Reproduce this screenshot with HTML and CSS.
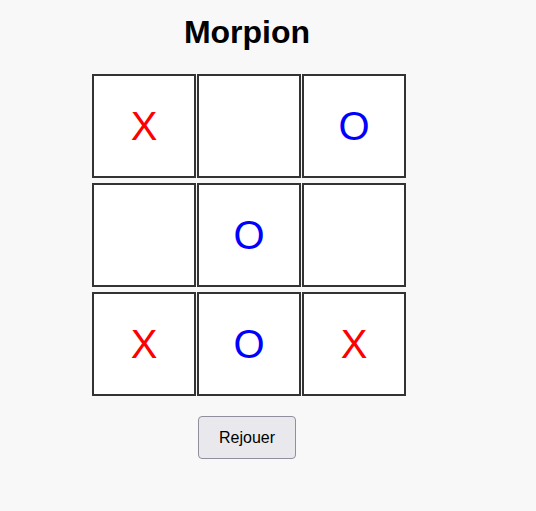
FILE: index.html
```html
<!DOCTYPE html>
<html lang="fr">
<head>
<meta charset="utf-8">
<title>Morpion</title>
<link rel="stylesheet" href="styles.css">
</head>
<body>
<main class="app">
  <h1 class="title">Morpion</h1>
  <div class="board">
    <div class="cell x">X</div>
    <div class="cell"></div>
    <div class="cell o">O</div>
    <div class="cell"></div>
    <div class="cell o">O</div>
    <div class="cell"></div>
    <div class="cell x">X</div>
    <div class="cell o">O</div>
    <div class="cell x">X</div>
  </div>
  <button class="reset" type="button">Rejouer</button>
</main>
</body>
</html>
```
FILE: styles.css
```css
html, body {
  margin: 0;
  padding: 0;
  background: #f8f8f8;
  font-family: "Liberation Sans", Arial, sans-serif;
}

.app {
  width: 494px;
  display: flex;
  flex-direction: column;
  align-items: center;
}

.title {
  font-size: 32px;
  font-weight: bold;
  line-height: 37px;
  margin: 14px 0 23px;
  color: #000;
}

/* columns are 100px; the 2px cell borders spill into the 5px gap */
.board {
  display: grid;
  grid-template-columns: repeat(3, 100px);
  gap: 5px;
}

.cell {
  width: 100px;
  height: 100px;
  border: 2px solid #333;
  background: #fff;
  display: flex;
  align-items: center;
  justify-content: center;
  font-size: 40px;
}

.cell.x { color: #ff0000; }
.cell.o { color: #0000ff; }

.reset {
  margin-top: 20px;
  font-family: "Liberation Sans", Arial, sans-serif;
  font-size: 16px;
  line-height: 17px;
  padding: 12px 20px;
  color: #000;
  background: #e9e9ed;
  border: 1px solid #8f8f9d;
  border-radius: 4px;
  cursor: pointer;
}
```
